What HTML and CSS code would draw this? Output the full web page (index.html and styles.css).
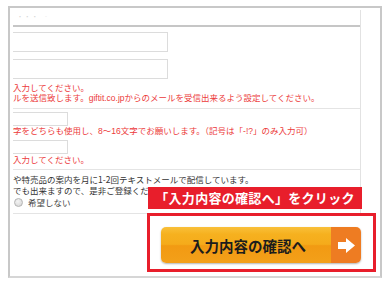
FILE: index.html
```html
<!DOCTYPE html>
<html lang="ja">
<head>
<meta charset="utf-8">
<title>入力フォーム</title>
<link rel="stylesheet" href="styles.css">
</head>
<body>
<div class="frame">
  <div class="col">
    <div class="sheet">
      <div class="row-top"><span class="faint">・ ・ ・&nbsp;&nbsp;&nbsp;&nbsp;‐</span></div>
      <div class="sec sec1">
        <div class="input w155 h20"></div>
        <div class="input w155 h20 mt7"></div>
        <p class="err mt4">入力してください。<br>ルを送信致します。giftit.co.jpからのメールを受信出来るよう設定してください。</p>
      </div>
      <div class="sec sec2">
        <div class="input w55 h14"></div>
        <p class="err">字をどちらも使用し、8～16文字でお願いします。（記号は「-!?」のみ入力可）</p>
        <div class="input w55 h14 mt4"></div>
        <p class="err mt1">入力してください。</p>
      </div>
      <div class="sec sec3">
        <p class="info">や特売品の案内を月に1-2回テキストメールで配信しています。<br>でも出来ますので、是非ご登録くだ</p>
        <label class="radio-row"><span class="radio"></span><span>希望しない</span></label>
      </div>
    </div>
  </div>
  <div class="banner">「入力内容の確認へ」をクリック</div>
  <div class="callout">
    <div class="btn">
      <span class="btn-label">入力内容の確認へ</span>
      <span class="btn-arrow"><svg width="17" height="15" viewBox="0 0 17 15"><path d="M0 4 H8 V0 L17 7.5 L8 15 V11 H0 Z" fill="#fff"/></svg></span>
    </div>
  </div>
</div>
</body>
</html>
```
FILE: styles.css
```css
html, body {
  margin: 0;
  padding: 0;
  background: #fff;
}
body {
  font-family: "Noto Sans CJK JP", "Noto Sans", sans-serif;
}
p { margin: 0; }

.frame {
  position: relative;
  box-sizing: border-box;
  margin: 6px 0 0 8px;
  width: 374px;
  height: 272px;
  border: 2px solid #c8c8c8;
  border-bottom-color: #d6d6d6;
  padding: 2px 0 0 3px;
  display: flex;
}
.col {
  width: 347px;
  border-right: 1px solid #e2e2e2;
  overflow: hidden;
  align-self: flex-start;
  height: 204px;
}
.sheet {
  width: 347px;
}
.row-top {
  height: 17px;
  border-bottom: 2px solid #c6c6c6;
  padding-left: 4px;
  box-sizing: border-box;
  line-height: 5px;
}
.faint {
  font-size: 6px;
  color: #d4d4d4;
}
.sec {
  border-bottom: 1px solid #e4e4e4;
}
.sec1 { padding: 5px 0 5px; }
.sec2 { padding: 3px 0 4px; }
.sec3 { padding: 4px 0 5px; }

.input {
  box-sizing: border-box;
  border: 1px solid #dcdcdc;
  border-left: none;
  background: #fff;
}
.w155 { width: 155px; }
.w55 { width: 55px; }
.h20 { height: 20px; }
.h14 { height: 14px; }
.mt1 { margin-top: 1px; }
.mt4 { margin-top: 4px; }
.mt7 { margin-top: 7px; }

.err {
  font-family: "Liberation Sans", "Noto Sans CJK JP", sans-serif;
  font-size: 8.5px;
  line-height: 10px;
  color: #ec3a3a;
  white-space: nowrap;
}
.info {
  font-size: 8.5px;
  line-height: 11px;
  color: #333;
  white-space: nowrap;
}
.radio-row {
  display: flex;
  align-items: center;
  height: 12px;
  font-size: 8.5px;
  color: #444;
  padding-left: 1px;
}
.radio {
  width: 7px;
  height: 7px;
  border-radius: 50%;
  border: 1px solid #b4b4b4;
  background: radial-gradient(circle at 40% 35%, #f4f4f4, #d2d2d2);
  margin-right: 5px;
}

.banner {
  position: absolute;
  left: 138px;
  top: 179px;
  width: 214px;
  height: 22px;
  background: #e81e2b;
  color: #fff;
  font-weight: bold;
  font-size: 13px;
  line-height: 22px;
  text-align: center;
  letter-spacing: 0.3px;
  white-space: nowrap;
}
.callout {
  position: absolute;
  left: 137px;
  top: 205px;
  width: 229px;
  height: 59px;
  box-sizing: border-box;
  border: 3px solid #e81e2b;
  background: #fff;
  padding: 11px 0 0 11px;
}
.btn {
  display: flex;
  width: 200px;
  height: 36px;
  border-radius: 5px;
  overflow: hidden;
  box-shadow: 0 1px 2px rgba(0, 0, 0, 0.3);
}
.btn-label {
  flex: 1;
  display: flex;
  align-items: center;
  justify-content: center;
  padding-left: 4px;
  font-size: 14.5px;
  font-weight: bold;
  color: #1c1c1c;
  background: linear-gradient(#f9c03a 0%, #f6b11f 20%, #f5ab1b 48%, #f29a12 52%, #f3a01a 100%);
}
.btn-arrow {
  width: 30px;
  display: flex;
  align-items: center;
  justify-content: center;
  background: #ee7c22;
}
```
